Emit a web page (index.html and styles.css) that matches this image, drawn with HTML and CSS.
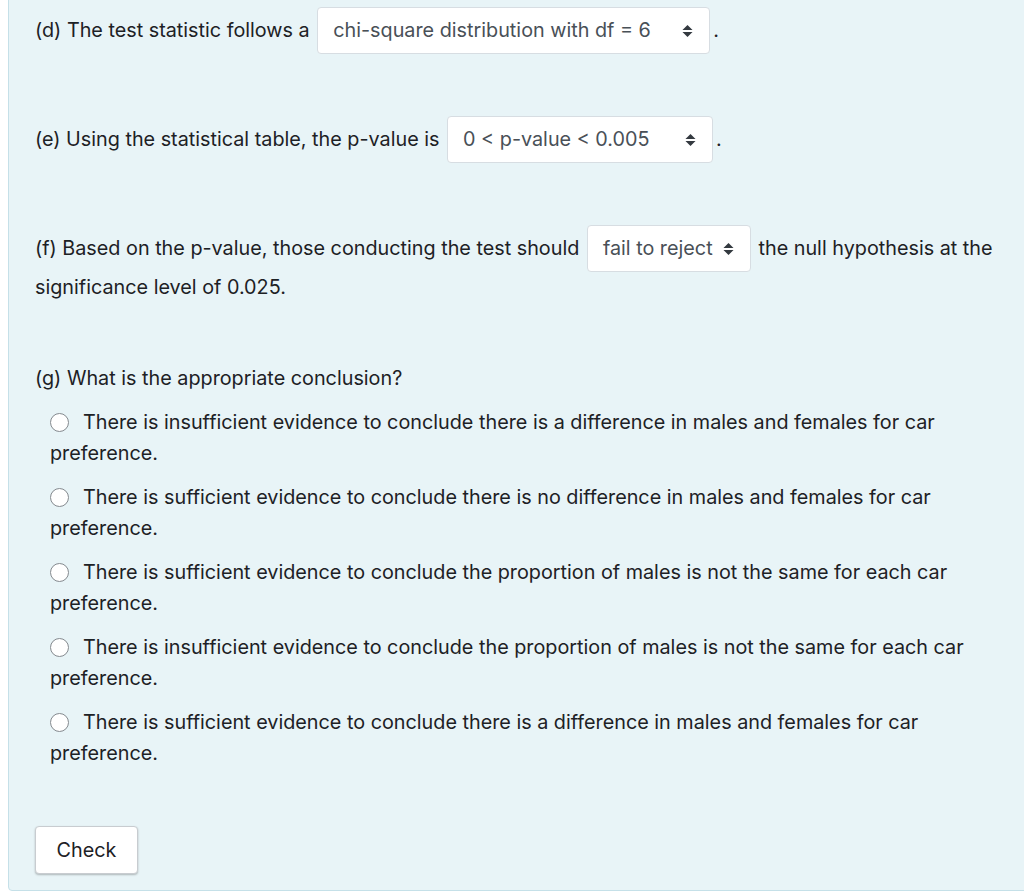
FILE: index.html
```html
<!DOCTYPE html>
<html>
<head>
<meta charset="utf-8">
<link rel="stylesheet" href="styles.css">
</head>
<body>
<div class="panel">
  <p class="q q-d">(d) The test statistic follows a <span class="sel sel-d"><span class="sel-text">chi-square distribution with df = 6</span><svg class="arrows" viewBox="0 0 12 14" width="11" height="14"><path d="M6 0.5 L11.5 6 L0.5 6 Z M6 13.5 L11.5 8 L0.5 8 Z" fill="#343a40"/></svg></span>.</p>
  <p class="q q-e">(e) Using the statistical table, the p-value is <span class="sel sel-e"><span class="sel-text">0 &lt; p-value &lt; 0.005</span><svg class="arrows" viewBox="0 0 12 14" width="11" height="14"><path d="M6 0.5 L11.5 6 L0.5 6 Z M6 13.5 L11.5 8 L0.5 8 Z" fill="#343a40"/></svg></span>.</p>
  <p class="q q-f">(f) Based on the p-value, those conducting the test should <span class="sel sel-f"><span class="sel-text">fail to reject</span><svg class="arrows" viewBox="0 0 12 14" width="11" height="14"><path d="M6 0.5 L11.5 6 L0.5 6 Z M6 13.5 L11.5 8 L0.5 8 Z" fill="#343a40"/></svg></span> the null hypothesis at the significance level of 0.025.</p>
  <p class="q q-g">(g) What is the appropriate conclusion?</p>
  <div class="options">
    <div class="opt"><span class="radio"></span>There is insufficient evidence to conclude there is a difference in males and females for car preference.</div>
    <div class="opt"><span class="radio"></span>There is sufficient evidence to conclude there is no difference in males and females for car preference.</div>
    <div class="opt"><span class="radio"></span>There is sufficient evidence to conclude the proportion of males is not the same for each car preference.</div>
    <div class="opt"><span class="radio"></span>There is insufficient evidence to conclude the proportion of males is not the same for each car preference.</div>
    <div class="opt"><span class="radio"></span>There is sufficient evidence to conclude there is a difference in males and females for car preference.</div>
  </div>
  <button class="check">Check</button>
</div>
</body>
</html>
```
FILE: styles.css
```css
html, body {
  margin: 0;
  padding: 0;
  background: #ffffff;
}
body {
  font-family: Inter, "Noto Sans", sans-serif;
  color: #1d2125;
  font-size: 19.8px;
  line-height: 31px;
}
.panel {
  margin-left: 8px;
  margin-top: -1px;
  width: 1030px;
  box-sizing: border-box;
  background: #e8f4f7;
  border: 1px solid #c5e0e8;
  border-radius: 0 0 0 4px;
  padding: 7px 30px 16px 26px;
  display: flex;
  flex-direction: column;
  align-items: flex-start;
}
.q {
  margin: 0;
  max-width: 975px;
}
.q-e { margin-top: 62px; }
.q-f { margin-top: 62px; }
.q-g { margin-top: 60px; }
.sel {
  display: inline-flex;
  align-items: center;
  justify-content: space-between;
  height: 47px;
  line-height: 45px;
  box-sizing: border-box;
  background: #fff;
  border: 1px solid #d7dde2;
  border-radius: 4px;
  padding: 0 16px 0 15px;
  color: #495057;
  margin: 0 3px 0 2px;
}
.sel-d { width: 393px; }
.sel-e { width: 266px; }
.sel-f { width: 164px; margin-right: 2px; }
.arrows { flex: none; }
.options {
  display: flex;
  flex-direction: column;
  gap: 13px;
  margin-top: 13px;
  padding-left: 15px;
  width: 930px;
}
.opt {
  margin: 0;
}
.radio {
  display: inline-block;
  width: 17px;
  height: 17px;
  border: 1px solid #858a8f;
  border-radius: 50%;
  background: #fff;
  vertical-align: -3px;
  margin: 0 14px 0 0;
}
.check {
  margin-top: 57px;
  width: 103px;
  height: 48px;
  background: #fff;
  border: 1px solid #c8ccd0;
  border-radius: 4px;
  box-shadow: 0 1px 2px rgba(0,0,0,0.25);
  font-family: inherit;
  font-size: 19.8px;
  color: #1d2125;
  padding: 0;
}
```
